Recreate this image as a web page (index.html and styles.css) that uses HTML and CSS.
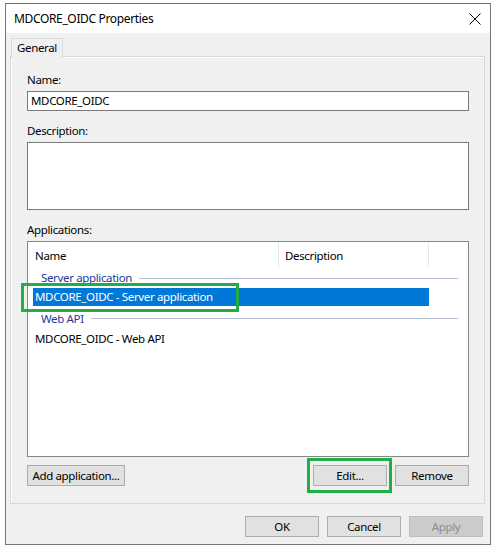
FILE: index.html
```html
<!DOCTYPE html>
<html>
<head>
<meta charset="utf-8">
<link rel="stylesheet" href="styles.css">
</head>
<body>
<div class="window">
  <div class="titlebar">
    <span class="title">MDCORE_OIDC Properties</span>
    <svg class="close" width="12" height="12" viewBox="0 0 12 12"><path d="M0.5 0.5 L11.5 11.5 M11.5 0.5 L0.5 11.5" stroke="#000" stroke-width="1" fill="none"/></svg>
  </div>
  <div class="body">
    <div class="tabs"><div class="tab">General</div></div>
    <div class="panel">
      <div class="label first">Name:</div>
      <div class="input">MDCORE_OIDC</div>
      <div class="label">Description:</div>
      <div class="textarea"></div>
      <div class="label">Applications:</div>
      <div class="list">
        <div class="list-header">
          <div class="col col-name">Name</div>
          <div class="col col-desc">Description</div>
        </div>
        <div class="group g1"><span>Server application</span><i class="rule"></i></div>
        <div class="row selected">MDCORE_OIDC - Server application</div>
        <div class="group g2"><span>Web API</span><i class="rule"></i></div>
        <div class="row">MDCORE_OIDC - Web API</div>
        <div class="mark mark-row"></div>
      </div>
      <div class="list-buttons">
        <div class="btn btn-add">Add application...</div>
        <div class="spacer"></div>
        <div class="edit-wrap"><div class="btn btn-sm">Edit...</div><div class="mark mark-edit"></div></div>
        <div class="btn btn-sm">Remove</div>
      </div>
    </div>
    <div class="footer">
      <div class="btn btn-sm">OK</div>
      <div class="btn btn-sm">Cancel</div>
      <div class="btn btn-sm disabled">Apply</div>
    </div>
  </div>
</div>
</body>
</html>
```
FILE: styles.css
```css
html, body { margin: 0; padding: 0; background: #fff; }
body { font-family: "Noto Sans", "Open Sans", sans-serif; font-size: 11.5px; letter-spacing: -0.35px; color: #000; }
.window {
  box-sizing: border-box;
  margin: 3px 0 0 5px;
  width: 486px;
  height: 542px;
  border: 1px solid #777;
  display: flex;
  flex-direction: column;
}
.titlebar {
  height: 29px;
  background: #fff;
  display: flex;
  align-items: center;
  padding-left: 8px;
  padding-right: 8px;
}
.title { flex: 1; line-height: 16px; font-size: 12px; padding-top: 1px; }
.close { margin-right: 1px; }
.body {
  flex: 1;
  background: #f0f0f0;
  padding: 5px 5px 0 4px;
  display: flex;
  flex-direction: column;
}
.tabs { display: flex; height: 19px; position: relative; z-index: 1; margin-bottom: -1px; }
.tab {
  box-sizing: border-box;
  margin-left: 1px;
  width: 52px;
  height: 20px;
  border: 1px solid #d9d9d9;
  border-bottom: none;
  background: #f0f0f0;
  padding-left: 5px;
  line-height: 18px;
}
.panel {
  box-sizing: border-box;
  width: 475px;
  height: 448px;
  border: 1px solid #d9d9d9;
  box-shadow: inset 1px 1px 0 #fff;
  padding: 0 15px 0 16px;
  display: flex;
  flex-direction: column;
}
.label { line-height: 16px; height: 16px; margin-top: 12px; margin-bottom: 3px; }
.label.first { margin-top: 15px; }
.input {
  box-sizing: border-box;
  height: 20px;
  border: 1px solid #7a7a7a;
  background: #fff;
  padding-left: 3px;
  line-height: 18px;
}
.textarea {
  box-sizing: border-box;
  height: 68px;
  border: 1px solid #7a7a7a;
  background: #fff;
}
.list {
  position: relative;
  box-sizing: border-box;
  height: 216px;
  border: 1px solid #828790;
  background: #fff;
}
.list-header { display: flex; height: 26px; }
.col { box-sizing: border-box; border-right: 1px solid #e5e5e5; margin-top: 1px; height: 24px; line-height: 25px; }
.col-name { width: 251px; padding-left: 7px; }
.col-desc { width: 150px; padding-left: 6px; }
.group { display: flex; align-items: center; height: 20px; margin-left: 13px; margin-right: 10px; color: #1e3a96; line-height: 16px; }
.group .rule { flex: 1; height: 1px; background: #b7bfd8; margin-left: 7px; }
.row { height: 18px; line-height: 18px; padding-left: 2px; margin-left: 5px; width: 396px; box-sizing: border-box; }
.row.selected { background: #0078d7; color: #fff; }
.g2 { height: 24px; padding-top: 1px; box-sizing: border-box; }
.mark { position: absolute; border: 3px solid #22ad47; box-sizing: border-box; }
.mark-row { left: -7px; top: 41px; width: 218px; height: 29px; }
.list-buttons { display: flex; margin-top: 8px; height: 21px; }
.spacer { flex: 1; }
.btn {
  box-sizing: border-box;
  height: 21px;
  border: 1px solid #adadad;
  background: #e1e1e1;
  text-align: center;
  line-height: 19px;
  white-space: nowrap;
}
.btn-add { width: 98px; }
.btn-sm { width: 74px; }
.edit-wrap { position: relative; margin-right: 8px; }
.mark-edit { left: -6px; top: -7px; width: 85px; height: 35px; }
.footer { display: flex; justify-content: flex-end; gap: 8px; margin-top: 12px; padding-right: 2px; }
.btn.disabled { background: #cccccc; border-color: #bfbfbf; color: #8c8c8c; }
```
